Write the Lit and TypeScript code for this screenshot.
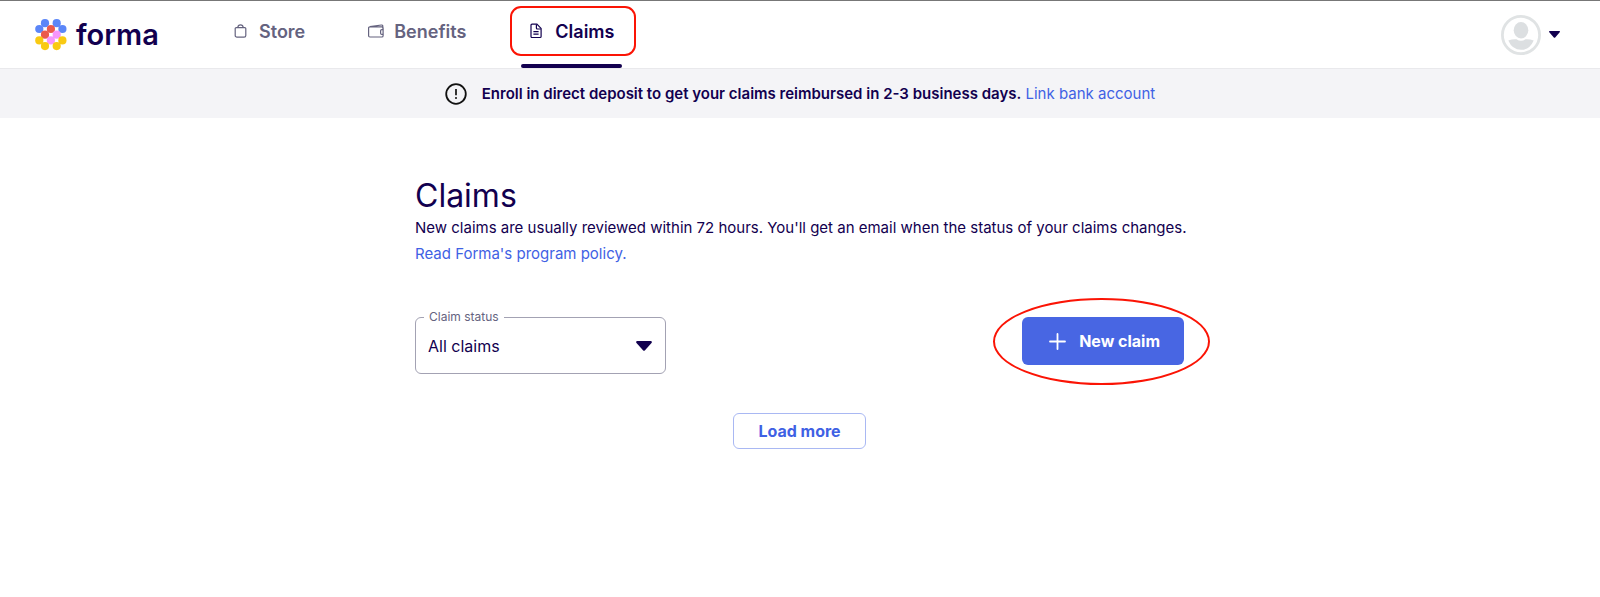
import { LitElement, html, css, svg } from "lit";
import { customElement, state } from "lit/decorators.js";

const LOGO_DOTS: [number, number, string][] = [
  [10, 4.2, "#5b86f8"], [21.7, 4.2, "#5b86f8"],
  [4.3, 10, "#5b86f8"], [27.4, 10, "#5b86f8"],
  [15.9, 10, "#ea5a4c"], [10, 15.7, "#ea5a4c"],
  [21.7, 15.7, "#f796fb"], [15.9, 21.4, "#f796fb"],
  [4.3, 21.4, "#f9ca12"], [27.4, 21.4, "#f9ca12"],
  [10, 27.1, "#f9ca12"], [21.7, 27.1, "#f9ca12"],
];

const bagIcon = svg`<path d="M3.200 4.600h8.600a1 1 0 0 1 1 1v6.800a1.700 1.700 0 0 1-1.700 1.700H3.900a1.700 1.700 0 0 1-1.700-1.700V5.600a1 1 0 0 1 1-1z"/><path d="M4.800 4.500c.3-3.600 5.100-3.600 5.400 0"/>`;
const walletIcon = svg`<path d="M14.800 5.600v-2.400a1.200 1.200 0 0 0-1.400-1.200L2 3.700M1.800 3.800h12a1.300 1.300 0 0 1 1.300 1.300v7.600a1.300 1.300 0 0 1-1.300 1.300h-12a1.200 1.200 0 0 1-1.200-1.200V5a1.200 1.200 0 0 1 1.200-1.200z"/><path d="M15.100 6.600h-1.300a1.200 1.200 0 0 0-1.200 1.200v2.400a1.200 1.200 0 0 0 1.200 1.200h1.300"/>`;
const fileIcon = svg`<path d="M3 1.200h4.900l4.200 4.200v8.100a1 1 0 0 1-1 1H3a1 1 0 0 1-1-1V2.200a1 1 0 0 1 1-1z"/><path d="M7.400 1.400v3.600a1 1 0 0 0 1 1h3.500M4.400 8.600h5.200M4.400 11.200h5.200"/>`;

const NAV = [
  { name: "Store", icon: bagIcon },
  { name: "Benefits", icon: walletIcon },
  { name: "Claims", icon: fileIcon },
];

@customElement("app-root")
export class AppRoot extends LitElement {
  @state() private current = "Claims";

  static styles = css`
    :host {
      --ink: #12004f;
      --muted: #65637f;
      --blue: #3f61e4;
      display: block;
      min-height: 100vh;
      background: #fff;
      color: var(--ink);
      font-family: Inter, "Liberation Sans", sans-serif;
      font-size: 15px;
      line-height: 26px;
    }
    * { box-sizing: border-box; }
    a { text-decoration: none; color: var(--blue); }
    button, select { font: inherit; cursor: pointer; }
    .header {
      display: flex;
      height: 69px;
      padding: 0 40px 0 35px;
      border-top: 1px solid #777;
      border-bottom: 1px solid #e9e9ec;
    }
    .brand {
      display: flex;
      align-items: center;
      gap: 9px;
      width: 190px;
      color: var(--ink);
      font-size: 29px;
      font-weight: 600;
      line-height: 32px;
    }
    .brand svg { width: 32px; height: 32px; flex: none; }
    .nav { display: flex; gap: 47px; }
    .tab {
      position: relative;
      display: flex;
      gap: 10px;
      padding: 18px 8px 19px;
      border-bottom: 4px solid transparent;
      color: var(--muted);
      font-size: 18px;
      font-weight: 600;
    }
    .tab svg {
      width: 16px;
      height: 16px;
      margin-top: 4px;
      fill: none;
      stroke: currentColor;
      stroke-width: 1.2;
    }
    .tab.active { color: var(--ink); }
    .tab.active::before {
      content: "";
      position: absolute;
      inset: auto 0 -4px;
      height: 4px;
      border-radius: 2px;
      background: var(--ink);
    }
    .tab.active::after {
      content: "";
      position: absolute;
      inset: 5px -14px 8px -11px;
      border: 2px solid #fb1405;
      border-radius: 11px;
      pointer-events: none;
    }
    .account {
      display: flex;
      align-items: center;
      gap: 8px;
      margin-left: auto;
      padding: 0;
      border: 0;
      background: none;
    }
    .avatar { width: 40px; height: 40px; }
    .caret { width: 11px; height: 7px; fill: var(--ink); }
    .banner {
      display: flex;
      justify-content: center;
      align-items: center;
      gap: 15px;
      padding: 12px 16px 11px;
      background: #f4f4f7;
    }
    .banner svg { width: 22px; height: 22px; flex: none; }
    .banner p { margin: 0; }
    .banner strong { font-weight: 600; }
    .main {
      max-width: 802px;
      margin: 0 auto;
      padding: 59px 17px 56px 16px;
    }
    h1 {
      margin: 0;
      font-size: 32px;
      font-weight: 400;
      line-height: 38px;
    }
    .intro { margin: 0 -17px 0 0; }
    .intro a { display: block; width: fit-content; }
    .tools {
      display: flex;
      justify-content: space-between;
      align-items: flex-start;
      margin-top: 50px;
    }
    .field { position: relative; width: 251px; }
    .field label {
      position: absolute;
      top: -10px;
      left: 9px;
      padding: 0 5px;
      background: #fff;
      color: var(--muted);
      font-size: 12px;
      line-height: 20px;
    }
    .field select {
      width: 100%;
      height: 57px;
      padding: 0 40px 0 12px;
      border: 1px solid #a3a2b3;
      border-radius: 6px;
      appearance: none;
      background: #fff;
      color: var(--ink);
      font-size: 16px;
    }
    .field svg {
      position: absolute;
      top: 24px;
      right: 14px;
      width: 16px;
      height: 10px;
      fill: var(--ink);
      pointer-events: none;
    }
    .spot { position: relative; }
    .ring {
      position: absolute;
      inset: -19px -26px -20px -29px;
      border: 2px solid #fb1405;
      border-radius: 50%;
      pointer-events: none;
    }
    .primary {
      display: flex;
      align-items: center;
      gap: 13px;
      height: 48px;
      padding: 0 24px 0 27px;
      border: 0;
      border-radius: 6px;
      background: #4866e3;
      color: #fff;
      font-size: 16px;
      font-weight: 700;
    }
    .primary svg { width: 17px; height: 17px; stroke: #fff; stroke-width: 1.8; stroke-linecap: round; }
    .secondary {
      display: block;
      height: 36px;
      margin: 39px auto 0;
      padding: 0 24px;
      border: 1px solid #a9b8f3;
      border-radius: 6px;
      background: #fff;
      color: var(--blue);
      font-size: 16px;
      font-weight: 700;
    }
  `;

  render() {
    return html`
      <header class="header">
        <a class="brand" href="#">
          <svg viewBox="0 0 32 32" aria-hidden="true">
            ${LOGO_DOTS.map(([x, y, c]) => svg`<circle cx=${x} cy=${y} r="4.1" fill=${c}></circle>`)}
          </svg>
          forma
        </a>
        <nav class="nav" aria-label="Main">
          ${NAV.map((n) => html`
            <a class="tab ${n.name === this.current ? "active" : ""}" href="#" @click=${() => (this.current = n.name)}>
              <svg viewBox="0 0 16 16" aria-hidden="true">${n.icon}</svg>${n.name}
            </a>`)}
        </nav>
        <button class="account" aria-label="Account menu">
          <svg class="avatar" viewBox="0 0 40 40">
            <circle cx="20" cy="20" r="18.600" fill="none" stroke="#e0e3e4" stroke-width="2.800"/>
            <ellipse cx="20" cy="15.300" rx="7.300" ry="8.200" fill="#dcdfe1"/>
            <path d="M7.300 25.500q4-1.500 8.200-1.200q4.500 3 9 0q4.200-.3 8.200 1.200q-4 9.300-12.700 9.300T7.300 25.500z" fill="#dcdfe1"/>
          </svg>
          <svg class="caret" viewBox="0 0 11 7"><path d="M.5 0h10q.8.500.2 1.200L6.200 6.500q-.7.700-1.400 0L.3 1.200Q-.2.500.5 0z"/></svg>
        </button>
      </header>
      <section class="banner">
        <svg viewBox="0 0 22 22" aria-hidden="true">
          <circle cx="11" cy="11" r="9.800" fill="none" stroke="#111" stroke-width="1.800"/>
          <path d="M11 6v6.200" stroke="#111" stroke-width="1.700"/>
          <circle cx="11" cy="14.900" r="1" fill="#111"/>
        </svg>
        <p><strong>Enroll in direct deposit to get your claims reimbursed in 2-3 business days.</strong> <a href="#">Link bank account</a></p>
      </section>
      <main class="main">
        <h1>Claims</h1>
        <p class="intro">
          New claims are usually reviewed within 72 hours. You'll get an email when the status of your claims changes.
          <a href="#">Read Forma's program policy.</a>
        </p>
        <div class="tools">
          <div class="field">
            <select id="status"><option>All claims</option></select>
            <label for="status">Claim status</label>
            <svg viewBox="0 0 16 10" aria-hidden="true"><path d="M1 0h14q1.500.500.500 1.900L9 9.200q-1 1-2 0L.5 1.900Q-.5.500 1 0z"/></svg>
          </div>
          <div class="spot">
            <button class="primary">
              <svg viewBox="0 0 17 17" aria-hidden="true"><path d="M8.500 1v15M1 8.500h15"/></svg>
              New claim
            </button>
            <span class="ring"></span>
          </div>
        </div>
        <button class="secondary">Load more</button>
      </main>
    `;
  }
}
